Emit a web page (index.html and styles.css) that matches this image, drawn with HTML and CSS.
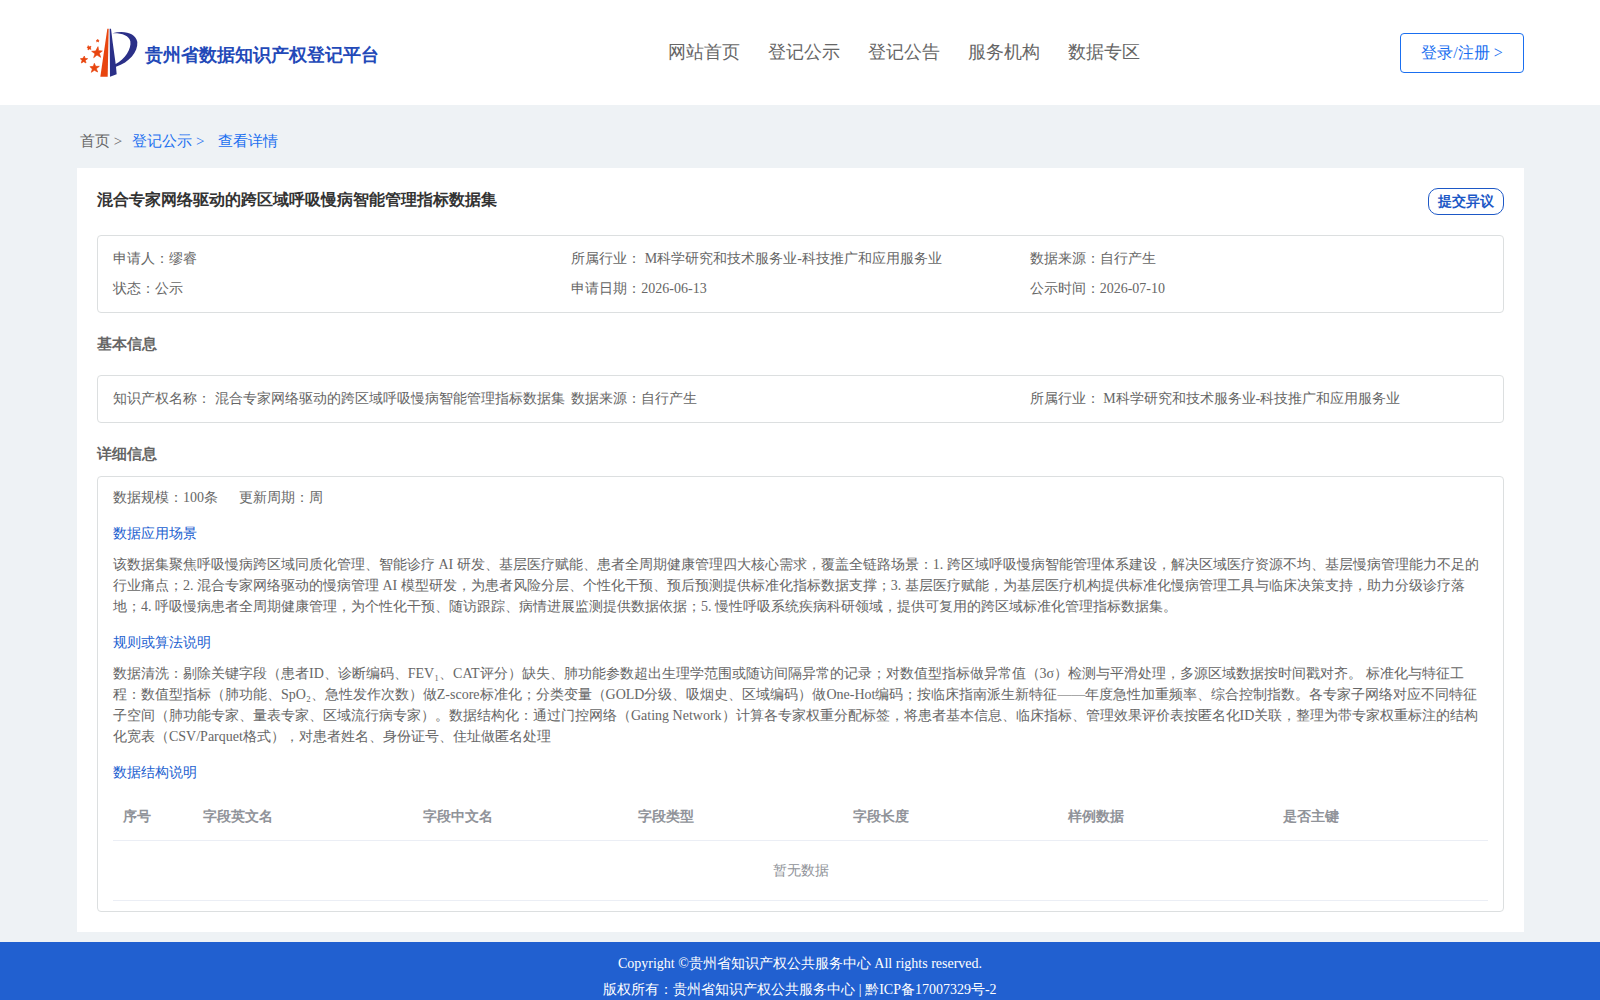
FILE: index.html
```html
<!DOCTYPE html>
<html lang="en">
<head>
    <meta charset="UTF-8">
    <meta name="viewport" content="width=device-width, initial-scale=1.0">
    <title>贵州省数据知识产权登记平台</title>
    <link rel="stylesheet" href="styles.css">
</head>
<body>
    <header class="header">
        <a href="#" class="logo">
            <svg class="logo-mark" viewBox="30 25 174 150" aria-hidden="true">
                <path fill="#e8450f" d="M112 27 L116 27 L113 171 L91 171 Z"/>
                <path fill="#2b3088" d="M119 27 L123 27 L128 68 L137 133 C165 119 185 88 181 65 C177 47 155 40 127 41 C165 31 197 42 202 67 C204 97 178 128 138 141 L140 164 L120 171 Z"/>
                <g fill="#e8450f" stroke="#e8450f" stroke-width="2">
                    <path d="M84 81 L86 93 L97 94 L88 101 L92 113 L81 106 L71 114 L75 102 L65 95 L77 94 Z"/>
                    <path d="M73 131 L77 140 L88 140 L79 147 L83 157 L73 152 L64 158 L67 148 L60 141 L70 140 Z"/>
                    <path d="M43 109 L45 116 L53 117 L46 122 L48 130 L41 126 L34 130 L36 122 L31 117 L39 116 Z"/>
                    <path d="M54 78 L58 81 L63 80 L61 85 L63 89 L58 88 L54 91 L54 86 L51 82 L55 82 Z"/>
                    <path d="M83 59 L84 62 L87 62 L85 64 L86 67 L83 65 L80 67 L81 64 L79 62 L82 62 Z"/>
                </g>
            </svg>
            <span>贵州省数据知识产权登记平台</span>
        </a>
        <nav class="nav-links">
            <a href="#">网站首页</a>
            <a href="#">登记公示</a>
            <a href="#">登记公告</a>
            <a href="#">服务机构</a>
            <a href="#">数据专区</a>
        </nav>
        <button type="button" class="login-btn">登录/注册 &gt;</button>
    </header>

    <main class="main-content">
        <div class="breadcrumb">
            <a href="#" class="home">首页 &gt;</a>
            <a href="#">登记公示 &gt;</a>
            <a href="#" class="current">查看详情</a>
        </div>

        <div class="card">
            <div class="card-head">
                <h1>混合专家网络驱动的跨区域呼吸慢病智能管理指标数据集</h1>
                <button type="button" class="objection-btn">提交异议</button>
            </div>

            <div class="box info-grid">
                <div>申请人：缪睿</div>
                <div>所属行业： M科学研究和技术服务业-科技推广和应用服务业</div>
                <div>数据来源：自行产生</div>
                <div>状态：公示</div>
                <div>申请日期：2026-06-13</div>
                <div>公示时间：2026-07-10</div>
            </div>

            <h2 class="basic-title">基本信息</h2>
            <div class="box info-grid">
                <div>知识产权名称： 混合专家网络驱动的跨区域呼吸慢病智能管理指标数据集</div>
                <div>数据来源：自行产生</div>
                <div>所属行业： M科学研究和技术服务业-科技推广和应用服务业</div>
            </div>

            <h2 class="detail-title">详细信息</h2>
            <div class="box detail">
                <div class="scale">
                    <span>数据规模：100条</span>
                    <span>更新周期：周</span>
                </div>
                <h3>数据应用场景</h3>
                <p>该数据集聚焦呼吸慢病跨区域同质化管理、智能诊疗 AI 研发、基层医疗赋能、患者全周期健康管理四大核心需求，覆盖全链路场景：1. 跨区域呼吸慢病智能管理体系建设，解决区域医疗资源不均、基层慢病管理能力不足的行业痛点；2. 混合专家网络驱动的慢病管理 AI 模型研发，为患者风险分层、个性化干预、预后预测提供标准化指标数据支撑；3. 基层医疗赋能，为基层医疗机构提供标准化慢病管理工具与临床决策支持，助力分级诊疗落地；4. 呼吸慢病患者全周期健康管理，为个性化干预、随访跟踪、病情进展监测提供数据依据；5. 慢性呼吸系统疾病科研领域，提供可复用的跨区域标准化管理指标数据集。</p>
                <h3>规则或算法说明</h3>
                <p>数据清洗：剔除关键字段（患者ID、诊断编码、FEV₁、CAT评分）缺失、肺功能参数超出生理学范围或随访间隔异常的记录；对数值型指标做异常值（3σ）检测与平滑处理，多源区域数据按时间戳对齐。 标准化与特征工程：数值型指标（肺功能、SpO₂、急性发作次数）做Z-score标准化；分类变量（GOLD分级、吸烟史、区域编码）做One-Hot编码；按临床指南派生新特征——年度急性加重频率、综合控制指数。各专家子网络对应不同特征子空间（肺功能专家、量表专家、区域流行病专家）。数据结构化：通过门控网络（Gating Network）计算各专家权重分配标签，将患者基本信息、临床指标、管理效果评价表按匿名化ID关联，整理为带专家权重标注的结构化宽表（CSV/Parquet格式），对患者姓名、身份证号、住址做匿名处理</p>
                <h3>数据结构说明</h3>
                <table class="field-table">
                    <thead>
                        <tr>
                            <th class="col-index">序号</th>
                            <th class="col-name">字段英文名</th>
                            <th>字段中文名</th>
                            <th>字段类型</th>
                            <th>字段长度</th>
                            <th>样例数据</th>
                            <th>是否主键</th>
                        </tr>
                    </thead>
                    <tbody>
                        <tr>
                            <td colspan="7">暂无数据</td>
                        </tr>
                    </tbody>
                </table>
            </div>
        </div>
    </main>

    <footer>
        <p>Copyright ©贵州省知识产权公共服务中心 All rights reserved.</p>
        <p>版权所有：贵州省知识产权公共服务中心 | 黔ICP备17007329号-2</p>
    </footer>
</body>
</html>
```
FILE: styles.css
```css
* {
    margin: 0;
    padding: 0;
    box-sizing: border-box;
}
body {
    font-family: "Liberation Serif", serif;
    font-size: 14px;
    line-height: 21px;
    color: #666;
    background-color: #eef2f5;
}
a {
    color: inherit;
    text-decoration: none;
}
button {
    font-family: inherit;
    background-color: #fff;
    cursor: pointer;
}
.header {
    display: grid;
    grid-template-columns: 588px auto 1fr;
    align-items: center;
    height: 105px;
    padding: 0 76px 0 80px;
    background-color: #fff;
}
.logo {
    display: flex;
    align-items: center;
    gap: 7px;
    font-size: 18px;
    font-weight: bold;
    color: #2349b8;
}
.logo span {
    padding-top: 6px;
}
.logo-mark {
    width: 58px;
    height: 50px;
}
.nav-links {
    display: flex;
    gap: 28px;
    font-size: 18px;
}
.login-btn {
    justify-self: end;
    width: 124px;
    height: 40px;
    padding-top: 2px;
    border: 1px solid #1a6ff0;
    border-radius: 4px;
    font-size: 16px;
    color: #1a6ff0;
}
.main-content {
    padding: 0 76px 10px 77px;
}
.breadcrumb {
    display: flex;
    align-items: center;
    height: 63px;
    padding: 10px 3px 0;
    font-size: 15px;
    color: #1a6ff0;
}
.breadcrumb .home {
    margin-right: 10px;
    color: #666;
}
.breadcrumb .current {
    margin-left: 14px;
}
.card {
    padding: 20px;
    background-color: #fff;
}
.card-head {
    display: flex;
    justify-content: space-between;
    align-items: flex-start;
    height: 47px;
}
.card-head h1 {
    font-size: 16px;
    line-height: 24px;
    color: #333;
}
.objection-btn {
    width: 76px;
    height: 27px;
    border: 1px solid #1d58c6;
    border-radius: 10px;
    font-size: 14px;
    font-weight: bold;
    color: #1d58c6;
}
.box {
    border: 1px solid #dcdfe0;
    border-radius: 4px;
}
.info-grid {
    display: grid;
    grid-template-columns: repeat(3, minmax(0, 1fr));
    padding: 8px 15px;
    line-height: 30px;
    white-space: nowrap;
}
h2 {
    font-size: 15px;
    line-height: 22px;
}
.basic-title {
    margin: 20px 0;
}
.detail-title {
    margin: 20px 0 11px;
}
.detail {
    padding: 10px 15px;
}
.scale {
    display: flex;
    gap: 21px;
}
.detail h3 {
    margin: 15px 0 10px;
    font-size: 14px;
    font-weight: normal;
    color: #2160d0;
}
.field-table {
    width: 100%;
    table-layout: fixed;
    border-collapse: collapse;
    color: #909399;
}
.field-table th,
.field-table td {
    border-bottom: 1px solid #ebeef5;
}
.field-table th {
    height: 47px;
    padding: 0 10px;
    text-align: left;
}
.field-table td {
    height: 60px;
    text-align: center;
}
.col-index {
    width: 80px;
}
.col-name {
    width: 220px;
}
footer {
    padding: 9px 0;
    text-align: center;
    line-height: 26px;
    color: #fff;
    background-color: #2160d0;
}
```
